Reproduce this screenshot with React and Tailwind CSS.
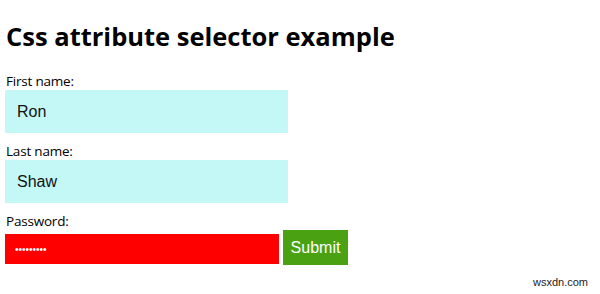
import React from 'react';

export default function App() {
  return (
    <div className="relative w-[600px] h-[294px] bg-white overflow-hidden font-['Open_Sans',sans-serif] text-black">
      <div className="px-[5px]">
        <h1 className="mt-[20px] ml-[1px] text-[25.5px] leading-[32px] font-bold">
          Css attribute selector example
        </h1>

        <form className="mt-[21px]" onSubmit={(e) => e.preventDefault()}>
          <label className="block ml-[1px] text-[13.5px] leading-[17px] tracking-[-0.2px]">First name:</label>
          <input
            type="text"
            name="fname"
            defaultValue="Ron"
            readOnly
            className="block w-[283px] h-[43px] px-[12px] bg-[#c4f8f6] outline-none font-['Liberation_Sans',Arial,sans-serif] text-[16px] text-[#111]"
          />

          <label className="block mt-[10px] ml-[1px] text-[13.5px] leading-[17px] tracking-[-0.2px]">Last name:</label>
          <input
            type="text"
            name="lname"
            defaultValue="Shaw"
            readOnly
            className="block w-[283px] h-[43px] px-[12px] bg-[#c4f8f6] outline-none font-['Liberation_Sans',Arial,sans-serif] text-[16px] text-[#111]"
          />

          <label className="block mt-[10px] ml-[1px] text-[13.5px] leading-[17px] tracking-[-0.2px]">Password:</label>
          <div className="flex items-start gap-[4px]">
            <input
              type="password"
              name="password"
              defaultValue="123456789"
              readOnly
              className="block mt-[4px] w-[274px] h-[30px] px-[10px] bg-[#ff0000] outline-none font-['Liberation_Sans',Arial,sans-serif] text-[10px] text-white"
            />
            <button
              type="submit"
              className="w-[65px] h-[35px] bg-[#4aa213] text-white font-['Liberation_Sans',Arial,sans-serif] text-[16px]"
            >
              Submit
            </button>
          </div>
        </form>
      </div>

      <span className="absolute right-[12px] bottom-[5px] font-['Liberation_Sans',Arial,sans-serif] text-[11px] leading-[13px] text-[#222]">
        wsxdn.com
      </span>
    </div>
  );
}
